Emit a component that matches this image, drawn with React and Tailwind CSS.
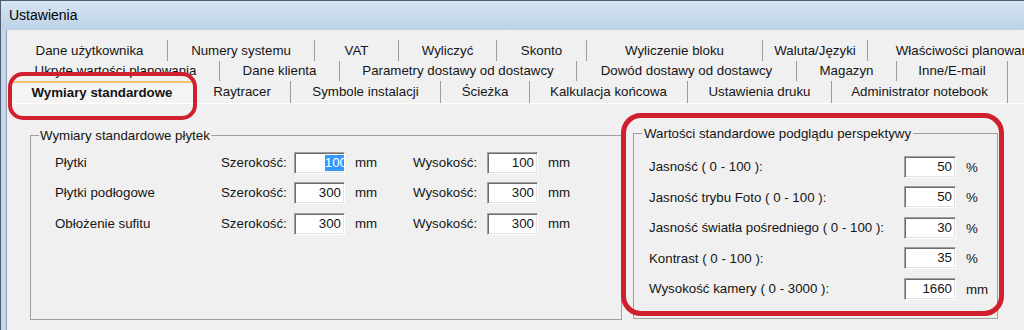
import React from "react";

const row1 = [
  ["Dane użytkownika", "w-[156px]"],
  ["Numery systemu", "w-[147px]"],
  ["VAT", "w-[84px]"],
  ["Wyliczyć", "w-[98px]"],
  ["Skonto", "w-[90px]"],
  ["Wyliczenie bloku", "w-[176px]"],
  ["Waluta/Języki", "w-[105px]"],
  ["Właściwości planowania", "w-[200px]"],
];

const row2 = [
  ["Ukryte wartości planowania", "w-[208px]"],
  ["Dane klienta", "w-[120px]"],
  ["Parametry dostawy od dostawcy", "w-[237px]"],
  ["Dowód dostawy od dostawcy", "w-[220px]"],
  ["Magazyn", "w-[100px]"],
  ["Inne/E-mail", "w-[111px]"],
];

const row3 = [
  ["Raytracer", "w-[97px]"],
  ["Symbole instalacji", "w-[150px]"],
  ["Ścieżka", "w-[89px]"],
  ["Kalkulacja końcowa", "w-[158px]"],
  ["Ustawienia druku", "w-[144px]"],
  ["Administrator notebook", "w-[176px]"],
];

const tiles = [
  ["Płytki", "100", "100", true],
  ["Płytki podłogowe", "300", "300", false],
  ["Obłożenie sufitu", "300", "300", false],
];

const preview = [
  ["Jasność ( 0 - 100 ):", "50", "%"],
  ["Jasność trybu Foto ( 0 - 100 ):", "50", "%"],
  ["Jasność światła pośredniego ( 0 - 100 ):", "30", "%"],
  ["Kontrast ( 0 - 100 ):", "35", "%"],
  ["Wysokość kamery ( 0 - 3000 ):", "1660", "mm"],
];

function Tab({ label, w }) {
  return (
    <div className={`${w} shrink-0 h-full flex items-center justify-center border-r border-[#9c9c9c] whitespace-nowrap`}>
      {label}
    </div>
  );
}

function Field({ value, w = "w-[51px]", selected }) {
  return (
    <div
      className={`${w} h-[22px] shrink-0 flex items-center justify-end overflow-hidden pr-[3px] bg-white border border-t-[#a0a0a0] border-l-[#a0a0a0] border-r-white border-b-white shadow-[inset_1px_1px_0_#6d6d6d,inset_-1px_-1px_0_#e3e3e3]`}
    >
      {selected ? (
        <span className="bg-[#3399ff] text-white leading-[16px] mr-[-6px]">{value}</span>
      ) : (
        <span>{value}</span>
      )}
    </div>
  );
}

export default function App() {
  return (
    <div className="relative w-[1024px] h-[330px] overflow-hidden bg-[#f0f0f0] font-['Liberation_Sans',Arial,sans-serif] text-[13.3px] text-[#151515]">
      {/* Title bar */}
      <div className="h-[30px] flex items-center pl-[8px] text-[14px] text-black border-t border-l border-[#4e5d70] bg-gradient-to-b from-[#d6e4f2] to-[#bdd2e8]">
        Ustawienia
      </div>

      <div className="flex h-[300px]">
        {/* window frame */}
        <div className="w-[7px] shrink-0 bg-[#c4d7ea] border-l border-[#4e5d70] border-r border-r-[#8d9cb0]" />

        <div className="flex-1 min-w-0 flex flex-col ml-[3px]">
          {/* Tab rows */}
          <div className="flex h-[21px] mt-[10px] pl-[2px]">
            {row1.map(([l, w]) => (
              <Tab key={l} label={l} w={w} />
            ))}
          </div>
          <div className="flex h-[20px] pl-[2px]">
            {row2.map(([l, w]) => (
              <Tab key={l} label={l} w={w} />
            ))}
          </div>
          <div className="flex h-[22px]">
            <div className="w-[184px] shrink-0 h-full flex items-center justify-center font-bold border-t-2 border-t-[#efc36e] border-l border-l-white border-r border-r-[#9c9c9c] bg-[#f4f4f4]">
              Wymiary standardowe
            </div>
            {row3.map(([l, w]) => (
              <Tab key={l} label={l} w={w} />
            ))}
          </div>

          {/* Tab page */}
          <div className="flex-1 flex items-start border-t border-white pl-[20px]">
            <fieldset className="w-[592px] shrink-0 h-[192px] mt-[24px] border border-[#a0a0a0]">
              <legend className="ml-[8px] px-[1px] leading-[15px]">Wymiary standardowe płytek</legend>
              <div className="flex flex-col gap-[8.5px] mt-[8.5px] pl-[24px]">
                {tiles.map(([name, w, h, sel]) => (
                  <div key={name} className="flex items-center h-[22px]">
                    <div className="w-[166px] shrink-0">{name}</div>
                    <div className="w-[73px] shrink-0">Szerokość:</div>
                    <Field value={w} selected={sel} />
                    <div className="w-[58px] shrink-0 ml-[10px]">mm</div>
                    <div className="w-[74px] shrink-0">Wysokość:</div>
                    <Field value={h} />
                    <div className="ml-[10px]">mm</div>
                  </div>
                ))}
              </div>
            </fieldset>

            <fieldset className="w-[365px] shrink-0 h-[193px] mt-[22px] ml-[11px] border border-[#a0a0a0]">
              <legend className="ml-[8px] px-[2px] leading-[15px]">Wartości standardowe podglądu perspektywy</legend>
              <div className="flex flex-col gap-[8.5px] mt-[14.5px] pl-[15px]">
                {preview.map(([label, v, unit]) => (
                  <div key={label} className="flex items-center h-[22px]">
                    <div className="w-[255px] shrink-0 pt-[1px]">{label}</div>
                    <Field value={v} w="w-[52px]" />
                    <div className="ml-[10px] pt-[2px]">{unit}</div>
                  </div>
                ))}
              </div>
            </fieldset>
          </div>
        </div>
      </div>

      {/* red annotation marks */}
      <div className="absolute left-[8px] top-[72px] w-[189px] h-[48px] border-[4px] border-[#d01f2d] rounded-[15px] pointer-events-none" />
      <div className="absolute left-[621px] top-[113px] w-[383px] h-[203px] border-[5px] border-[#d01f2d] rounded-[20px] pointer-events-none" />
    </div>
  );
}
